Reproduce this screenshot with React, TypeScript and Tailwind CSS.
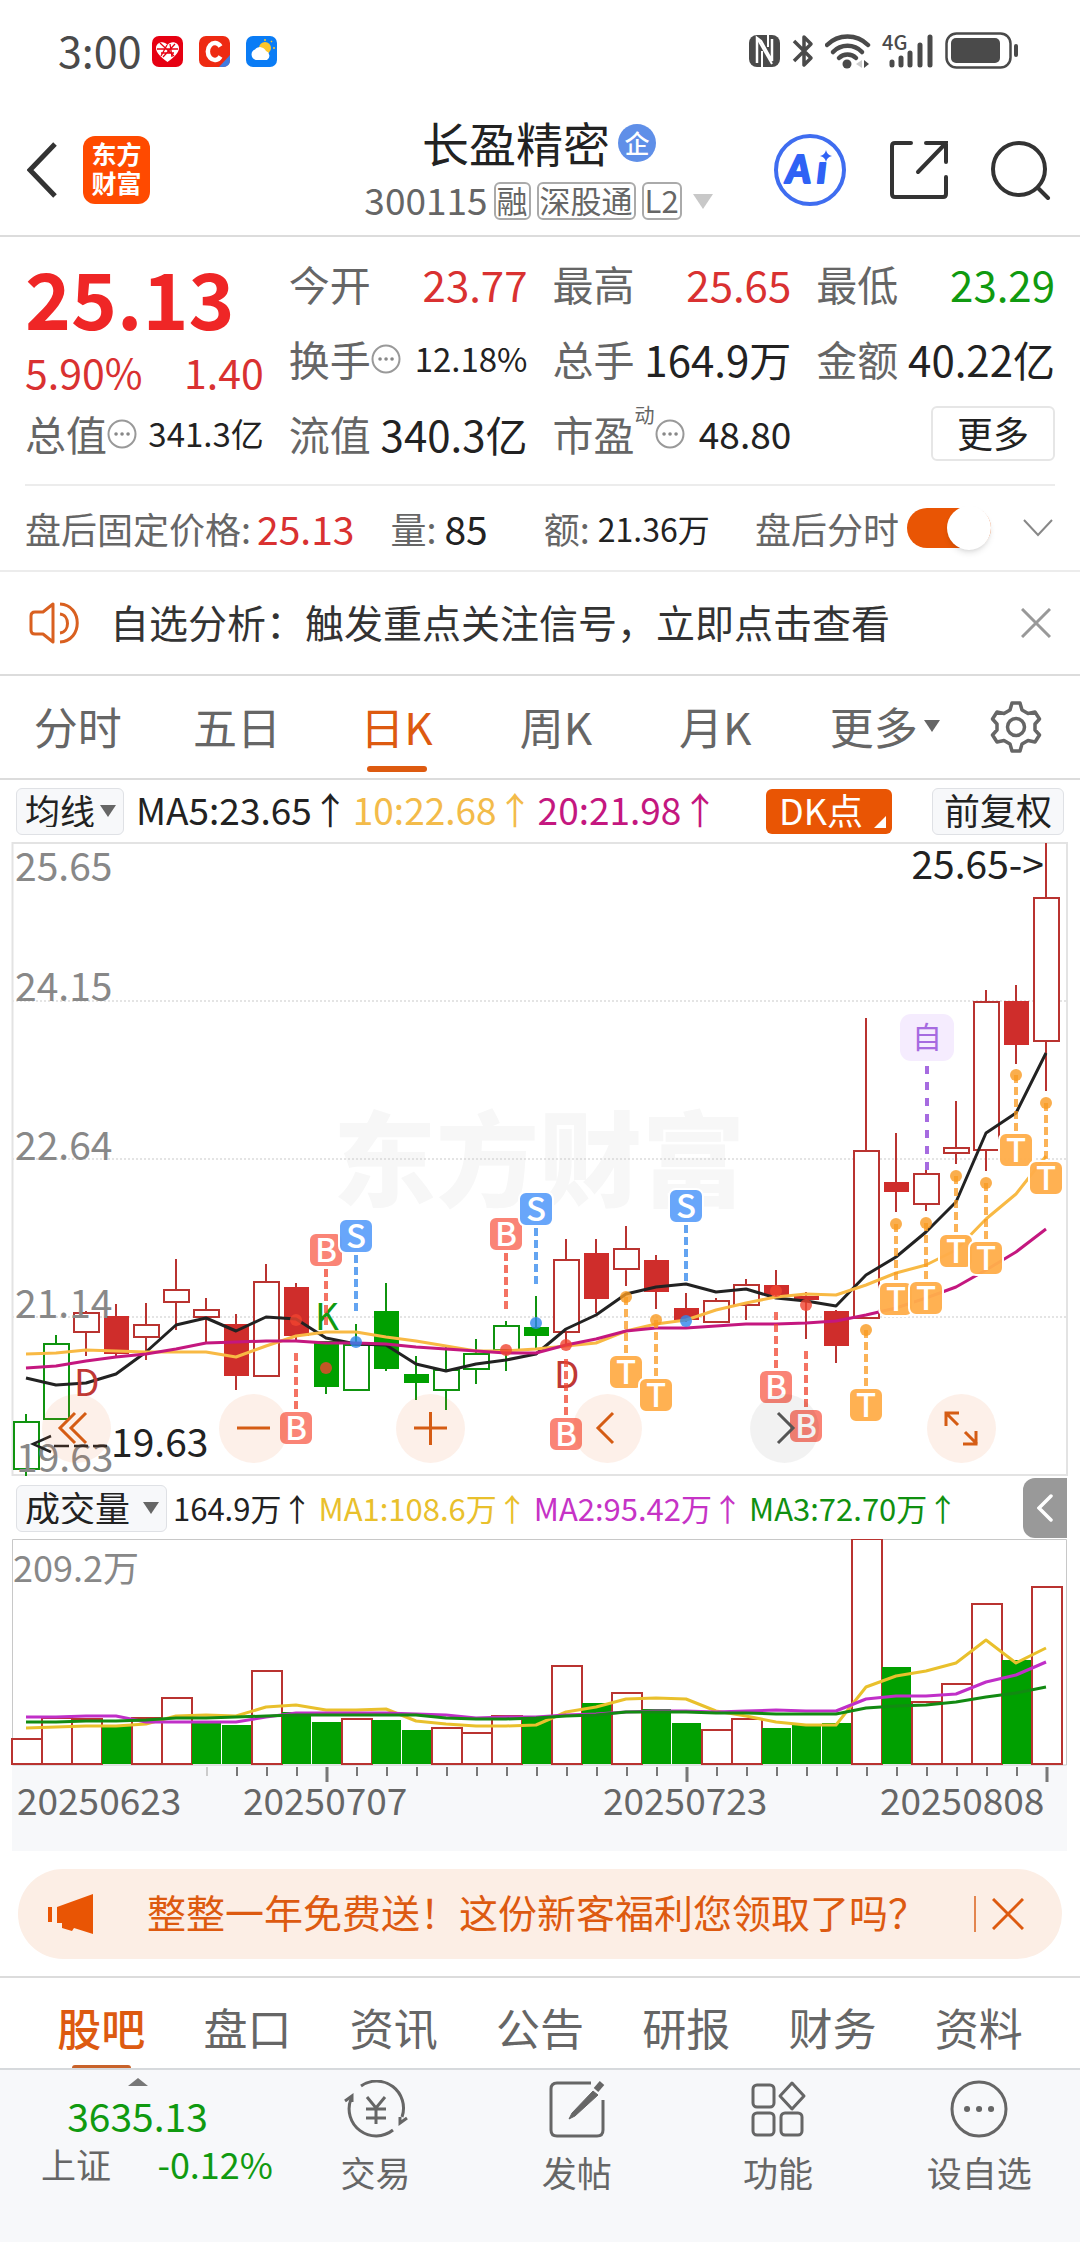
import { useState } from "react";
import type { ReactNode } from "react";

type Candle = {
  kind: "up" | "down" | "flat" | "drop";
  open: number;
  close: number;
  high: number;
  low: number;
};

type Marker = {
  label: "B" | "S" | "T";
  index: number;
  y: number;
  dot: number;
};

const CANDLE_STEP = 30;
const CANDLE_START = 26;
const RED = "#b93330";
const RED_FILL = "#cf2d2b";
const GREEN = "#0f930f";
const GREEN_FILL = "#00a000";

const MARKER_COLORS = {
  B: "#fa7f70",
  S: "#62a2fa",
  T: "#ffae4b",
};

const DOT_COLORS = {
  B: "#f0442f",
  S: "#2f86ec",
  T: "#f99a20",
};

// up: hollow red, down: solid red, flat: hollow green, drop: solid green
const candles: Candle[] = [
  { kind: "flat", open: 1422, close: 1469, high: 1414, low: 1476 },
  { kind: "flat", open: 1344, close: 1419, high: 1335, low: 1419 },
  { kind: "up", open: 1313, close: 1332, high: 1311, low: 1356 },
  { kind: "down", open: 1316, close: 1354, high: 1304, low: 1357 },
  { kind: "up", open: 1325, close: 1337, high: 1303, low: 1360 },
  { kind: "up", open: 1290, close: 1302, high: 1259, low: 1330 },
  { kind: "up", open: 1310, close: 1317, high: 1298, low: 1343 },
  { kind: "down", open: 1324, close: 1376, high: 1314, low: 1390 },
  { kind: "up", open: 1282, close: 1376, high: 1264, low: 1376 },
  { kind: "down", open: 1287, close: 1336, high: 1283, low: 1340 },
  { kind: "drop", open: 1341, close: 1387, high: 1341, low: 1394 },
  { kind: "flat", open: 1345, close: 1390, high: 1324, low: 1390 },
  { kind: "drop", open: 1311, close: 1369, high: 1283, low: 1371 },
  { kind: "drop", open: 1374, close: 1383, high: 1356, low: 1400 },
  { kind: "flat", open: 1370, close: 1390, high: 1347, low: 1410 },
  { kind: "flat", open: 1354, close: 1369, high: 1339, low: 1384 },
  { kind: "flat", open: 1326, close: 1350, high: 1321, low: 1371 },
  { kind: "drop", open: 1327, close: 1336, high: 1296, low: 1350 },
  { kind: "up", open: 1260, close: 1332, high: 1239, low: 1345 },
  { kind: "down", open: 1253, close: 1299, high: 1239, low: 1313 },
  { kind: "up", open: 1249, close: 1269, high: 1226, low: 1286 },
  { kind: "down", open: 1260, close: 1292, high: 1255, low: 1309 },
  { kind: "down", open: 1308, close: 1320, high: 1293, low: 1322 },
  { kind: "up", open: 1301, close: 1322, high: 1298, low: 1322 },
  { kind: "up", open: 1285, close: 1305, high: 1279, low: 1320 },
  { kind: "down", open: 1285, close: 1295, high: 1270, low: 1298 },
  { kind: "down", open: 1296, close: 1300, high: 1292, low: 1339 },
  { kind: "down", open: 1311, close: 1346, high: 1310, low: 1363 },
  { kind: "up", open: 1151, close: 1318, high: 1018, low: 1318 },
  { kind: "down", open: 1182, close: 1192, high: 1133, low: 1212 },
  { kind: "up", open: 1174, close: 1204, high: 1170, low: 1211 },
  { kind: "up", open: 1148, close: 1153, high: 1101, low: 1164 },
  { kind: "up", open: 1002, close: 1150, high: 990, low: 1171 },
  { kind: "down", open: 1001, close: 1045, high: 985, low: 1064 },
  { kind: "up", open: 898, close: 1041, high: 843, low: 1091 },
];

const ma5 = [
  1378, 1385, 1383, 1374, 1352, 1325, 1318, 1331, 1317, 1319, 1338, 1344, 1345, 1364, 1371, 1364, 1360, 1354,
  1329, 1315, 1294, 1287, 1284, 1292, 1289, 1298, 1301, 1306, 1275, 1257, 1232, 1202, 1133, 1113, 1053,
];
const ma10 = [
  1354, 1353, 1350, 1351, 1352, 1352, 1352, 1357, 1346, 1336, 1332, 1332, 1337, 1341, 1346, 1351, 1351, 1349,
  1346, 1343, 1331, 1324, 1320, 1310, 1303, 1297, 1294, 1295, 1285, 1273, 1265, 1250, 1219, 1194, 1156,
];
const ma20 = [
  1368, 1366, 1361, 1357, 1354, 1349, 1343, 1342, 1341, 1341, 1343, 1343, 1344, 1347, 1349, 1351, 1353, 1353,
  1345, 1339, 1331, 1328, 1328, 1326, 1324, 1324, 1323, 1321, 1315, 1308, 1298, 1287, 1270, 1252, 1229,
];

const markers: Marker[] = [
  { label: "B", index: 9, y: 1428, dot: 1320 },
  { label: "B", index: 10, y: 1250, dot: 1368 },
  { label: "S", index: 11, y: 1236, dot: 1342 },
  { label: "B", index: 16, y: 1234, dot: 1350 },
  { label: "S", index: 17, y: 1209, dot: 1323 },
  { label: "B", index: 18, y: 1434, dot: 1345 },
  { label: "T", index: 20, y: 1372, dot: 1297 },
  { label: "T", index: 21, y: 1395, dot: 1320 },
  { label: "S", index: 22, y: 1206, dot: 1321 },
  { label: "B", index: 25, y: 1387, dot: 1291 },
  { label: "B", index: 26, y: 1426, dot: 1305 },
  { label: "T", index: 28, y: 1405, dot: 1330 },
  { label: "T", index: 29, y: 1299, dot: 1224 },
  { label: "T", index: 30, y: 1298, dot: 1223 },
  { label: "T", index: 31, y: 1251, dot: 1176 },
  { label: "T", index: 32, y: 1258, dot: 1183 },
  { label: "T", index: 33, y: 1150, dot: 1075 },
  { label: "T", index: 34, y: 1178, dot: 1103 },
];

const volumes: [string, number][] = [
  ["r", 1739], ["r", 1718], ["r", 1719], ["g", 1726], ["r", 1718], ["r", 1698], ["g", 1723],
  ["g", 1725], ["r", 1671], ["g", 1712], ["g", 1722], ["r", 1719], ["g", 1720], ["g", 1730],
  ["r", 1728], ["r", 1733], ["r", 1716], ["g", 1718], ["r", 1666], ["g", 1703], ["r", 1693],
  ["g", 1709], ["g", 1723], ["r", 1730], ["r", 1719], ["g", 1728], ["g", 1725], ["g", 1723],
  ["r", 1539], ["g", 1667], ["r", 1702], ["r", 1684], ["r", 1604], ["g", 1660], ["r", 1587],
];

const volMa1 = [
  1728, 1727, 1726, 1726, 1724, 1716, 1715, 1716, 1707, 1705, 1710, 1710, 1709, 1721, 1724, 1726, 1726, 1725,
  1712, 1707, 1699, 1698, 1699, 1711, 1716, 1722, 1725, 1725, 1687, 1676, 1671, 1663, 1640, 1663, 1648,
];
const volMa2 = [
  1717, 1717, 1716, 1716, 1722, 1722, 1722, 1722, 1717, 1713, 1713, 1713, 1713, 1714, 1715, 1718, 1717, 1717,
  1715, 1714, 1712, 1711, 1711, 1712, 1711, 1710, 1711, 1711, 1699, 1696, 1696, 1694, 1682, 1675, 1662,
];
const volMa3 = [
  1722, 1722, 1721, 1721, 1720, 1718, 1718, 1717, 1716, 1715, 1715, 1715, 1715, 1715, 1718, 1719, 1719, 1718,
  1716, 1715, 1712, 1712, 1712, 1713, 1713, 1714, 1714, 1714, 1708, 1706, 1705, 1702, 1697, 1693, 1687,
];

const columnX = (index: number) => CANDLE_START + index * CANDLE_STEP;

const toPoints = (values: number[]) => values.map((y, index) => `${columnX(index)},${y}`).join(" ");

function Triangle({ className }: { className: string }) {
  return (
    <svg viewBox="0 0 16 12" className={className} aria-hidden="true">
      <path d="M0 0H16L8 12Z" fill="currentColor" />
    </svg>
  );
}

function StatusBar() {
  return (
    <div className="flex h-[100px] items-center justify-between pt-0.5 pr-[61px] pl-[58px]">
      <div className="flex items-center gap-2.5">
        <span className="pb-1 text-[43px] leading-none text-[#4a4a4a]">3:00</span>
        <div className="flex gap-4">
          <svg viewBox="0 0 31 31" className="size-[31px]">
            <rect width="31" height="31" rx="7" fill="#e60012" />
            <path
              d="M15.500 26C9 21 4 17 4 12C4 6 12 4 15.500 9C19 4 27 6 27 12C27 17 22 21 15.500 26Z"
              fill="#fff"
            />
            <path d="M8 7L22 20M15 9L9 20M23 8L11 21M5 13H26M18 8L20 21M9 17H22" stroke="#e60012" strokeWidth="1.300" />
          </svg>
          <svg viewBox="0 0 31 31" className="size-[31px]">
            <rect width="31" height="31" rx="7" fill="#ee2a12" />
            <path d="M21.500 10.500A7 8.500 0 1 0 21.500 20.500" fill="none" stroke="#fff" strokeWidth="4.500" />
            <path d="M31 19V24Q31 31 24 31H20Z" fill="#3f7be0" />
          </svg>
          <svg viewBox="0 0 31 31" className="size-[31px]">
            <rect width="31" height="31" rx="7" fill="#0a7cf5" />
            <circle cx="19" cy="12" r="6" fill="#ffc62a" />
            <path d="M19 3V5M27 12H29M25 6L26 5" stroke="#ffc62a" strokeWidth="1.500" />
            <path d="M10 24A5.500 5.500 0 0 1 9 13.500A6.500 6.500 0 0 1 20 15A5 5 0 0 1 21 24Z" fill="#fff" />
          </svg>
        </div>
      </div>
      <div className="flex items-center gap-[11px] text-[#4a4a4a]">
        <svg viewBox="0 0 32 34" className="h-[34px] w-8">
          <rect x="0" y="1" width="31" height="32" rx="8" fill="currentColor" />
          <path d="M8 29V4L12 7L23 27V5" fill="none" stroke="#fff" strokeWidth="2.500" />
          <path d="M8 4L23 30" stroke="#fff" strokeWidth="2" />
          <path d="M13 17V33M19 1V13" stroke="#fff" strokeWidth="2" />
        </svg>
        <svg viewBox="0 0 22 34" className="h-[34px] w-[22px]" fill="none" stroke="currentColor" strokeWidth="3.500">
          <path d="M2 7L19 24L12 31V3L19 10L2 27" strokeLinejoin="round" />
        </svg>
        <svg viewBox="0 0 46 36" className="h-9 w-[46px]" fill="none" stroke="currentColor" strokeWidth="4.500">
          <path d="M2 12A29 29 0 0 1 43 12" strokeLinecap="round" />
          <path d="M8 19A20 20 0 0 1 37 19" strokeLinecap="round" />
          <path d="M14 25A12 12 0 0 1 31 25" strokeLinecap="round" />
          <circle cx="22" cy="31" r="4.500" fill="currentColor" stroke="none" />
          <path d="M37 27L31 31L37 35Z" fill="#ccc" stroke="none" />
          <path d="M39 27L44 31L39 35Z" fill="currentColor" stroke="none" />
        </svg>
        <svg viewBox="0 0 52 36" className="h-9 w-[52px] overflow-visible">
          <text x="0" y="17" className="fill-[#4a4a4a] text-[20px] font-medium">4G</text>
          <path
            d="M10 29V32M19 25V32M28 20V32M38 12V32M48 4V32"
            stroke="currentColor"
            strokeWidth="5"
            strokeLinecap="round"
          />
        </svg>
        <svg viewBox="0 0 74 38" className="h-[38px] w-[74px]">
          <rect x="1.500" y="1.500" width="64" height="34" rx="10" fill="none" stroke="currentColor" strokeWidth="2.500" />
          <rect x="6" y="6" width="49" height="25" rx="5" fill="currentColor" />
          <path d="M71 14V23" stroke="currentColor" strokeWidth="4" strokeLinecap="round" />
        </svg>
      </div>
    </div>
  );
}

function Tag({ children }: { children: ReactNode }) {
  return (
    <span className="flex h-[38px] items-center rounded-md border-2 border-[#aaa] px-px pb-1 text-[31px] leading-none text-[#666]">
      {children}
    </span>
  );
}

function Header() {
  return (
    <header className="grid h-[137px] grid-cols-[1fr_auto_1fr] items-center border-b-2 border-[#dcdcdc] pt-1 pr-[29px] pl-[27px]">
      <div className="flex items-center gap-[26px]">
        <button type="button" aria-label="返回">
          <svg viewBox="0 0 30 56" className="h-14 w-[30px]" fill="none" stroke="#333" strokeWidth="5">
            <path d="M28 2L3 28L28 54" />
          </svg>
        </button>
        <a
          href="#home"
          className="flex h-[68px] w-[67px] flex-col items-center justify-center rounded-xl bg-[#ff4a00] pb-1 text-[25px] leading-[29px] font-bold text-white"
        >
          <span>东方</span>
          <span>财富</span>
        </a>
      </div>
      <div className="flex flex-col items-center gap-3">
        <h1 className="flex items-center gap-2 text-[47px] leading-none text-[#222]">
          <span className="pb-1">长盈精密</span>
          <span className="flex size-[38px] items-center justify-center rounded-full bg-[#5f8fe8] pb-0.5 text-[25px] font-medium text-white">
            企
          </span>
        </h1>
        <div className="flex items-center gap-[6px]">
          <span className="pb-1 text-[37px] leading-none text-[#666]">300115</span>
          <Tag>融</Tag>
          <Tag>深股通</Tag>
          <Tag>L2</Tag>
          <Triangle className="ml-1 h-[15px] w-[22px] text-[#c8c8c8]" />
        </div>
      </div>
      <div className="flex items-center justify-end gap-[42px]">
        <button type="button" aria-label="Ai">
          <svg viewBox="0 0 74 74" className="size-[74px]">
            <circle cx="37" cy="37" r="34" fill="none" stroke="#3f6df0" strokeWidth="4" />
            <text
              x="13 44"
              y="50"
              className="fill-[#2f62f5] stroke-[#2f62f5] font-['Lato'] text-[38px] font-black italic"
              strokeWidth="2"
              strokeLinejoin="round"
            >
              Aı
            </text>
            <path d="M53 17Q54 22 59 23Q54 24 53 29Q52 24 47 23Q52 22 53 17Z" fill="#2f62f5" />
          </svg>
        </button>
        <button type="button" aria-label="分享">
          <svg viewBox="0 0 60 60" className="size-[60px]" fill="none" stroke="#333" strokeWidth="4" strokeLinecap="round">
            <path d="M22 3H6Q3 3 3 6V54Q3 57 6 57H54Q57 57 57 54V37" />
            <path d="M37 3H57V22M57 3L29 32" />
          </svg>
        </button>
        <button type="button" aria-label="搜索">
          <svg viewBox="0 0 60 60" className="size-[60px]" fill="none" stroke="#333" strokeWidth="4" strokeLinecap="round">
            <circle cx="28" cy="29" r="26" />
            <path d="M47 48L57 58" />
          </svg>
        </button>
      </div>
    </header>
  );
}

function InfoDots() {
  return (
    <svg viewBox="0 0 30 30" className="size-[30px] shrink-0" aria-hidden="true">
      <circle cx="15" cy="15" r="13.500" fill="none" stroke="#999" strokeWidth="2" />
      <path d="M9 15H9.100M15 15H15.100M21 15H21.100" stroke="#888" strokeWidth="3.500" strokeLinecap="round" />
    </svg>
  );
}

function Quote({ label, children }: { label: ReactNode; children: ReactNode }) {
  return (
    <div className="flex h-[75px] items-center justify-between whitespace-nowrap">
      <dt className="flex items-center text-[41px] text-[#666]">{label}</dt>
      <dd className="text-[#222]">{children}</dd>
    </div>
  );
}

function QuotePanel() {
  return (
    <section className="grid grid-cols-4 gap-x-[25px] px-[25px] pt-[9px] pb-[13px] leading-none">
      <div className="flex flex-col">
        <div className="flex h-[100px] items-center text-[78px] font-bold text-[#ef2626]">25.13</div>
        <div className="flex h-[50px] items-center justify-between text-[41px] text-[#d93131]">
          <span>5.90%</span>
          <span>1.40</span>
        </div>
        <dl>
          <Quote label={<>总值<InfoDots /></>}>
            <span className="text-[33px]">341.3亿</span>
          </Quote>
        </dl>
      </div>
      <dl>
        <Quote label="今开">
          <span className="text-[42px] text-[#d93131]">23.77</span>
        </Quote>
        <Quote label={<>换手<InfoDots /></>}>
          <span className="text-[33px]">12.18%</span>
        </Quote>
        <Quote label="流值">
          <span className="text-[42px]">340.3亿</span>
        </Quote>
      </dl>
      <dl>
        <Quote label="最高">
          <span className="text-[42px] text-[#d93131]">25.65</span>
        </Quote>
        <Quote label="总手">
          <span className="text-[42px]">164.9万</span>
        </Quote>
        <Quote
          label={
            <>
              市盈<span className="-mt-2 self-start text-[20px]">动</span>
              <InfoDots />
            </>
          }
        >
          <span className="text-[37px]">48.80</span>
        </Quote>
      </dl>
      <div>
        <dl>
          <Quote label="最低">
            <span className="text-[42px] text-[#109a10]">23.29</span>
          </Quote>
          <Quote label="金额">
            <span className="text-[42px]">40.22亿</span>
          </Quote>
        </dl>
        <div className="flex h-[75px] items-center justify-end">
          <button
            type="button"
            className="h-[55px] w-[124px] rounded-md border-2 border-[#e6e6e6] pb-1 text-[36px] text-[#222]"
          >
            更多
          </button>
        </div>
      </div>
    </section>
  );
}

function AfterHours() {
  const [enabled, setEnabled] = useState(true);

  return (
    <section>
      <div className="mx-[25px] border-t-2 border-[#ececec]" />
      <div className="flex h-[84px] items-center pr-[27px] pl-[25px] text-[36px] leading-none whitespace-nowrap text-[#666]">
        <span>盘后固定价格:</span>
        <span className="ml-1.5 text-[39px] text-[#d93131]">25.13</span>
        <span className="ml-9">量:</span>
        <span className="ml-2 text-[39px] text-[#222]">85</span>
        <span className="ml-14">额:</span>
        <span className="ml-2 text-[32px] text-[#222]">21.36万</span>
        <label htmlFor="after-hours" className="ml-auto">
          盘后分时
        </label>
        <input
          id="after-hours"
          type="checkbox"
          role="switch"
          checked={enabled}
          onChange={() => setEnabled((previous) => !previous)}
          className="relative ml-2 h-10 w-[84px] appearance-none rounded-full bg-[#ccc] before:absolute before:-top-0.5 before:left-0 before:size-11 before:rounded-full before:bg-white before:shadow-md before:content-[''] checked:bg-[#e95504] checked:before:left-10"
        />
        <button type="button" aria-label="展开" className="ml-8">
          <svg viewBox="0 0 30 18" className="h-[18px] w-[30px]" fill="none" stroke="#888" strokeWidth="2">
            <path d="M1 1L15 16L29 1" />
          </svg>
        </button>
      </div>
    </section>
  );
}

function Notice() {
  return (
    <section className="flex h-[106px] items-center border-y-2 border-t-[#ececec] border-b-[#dcdcdc] pr-[29px] pl-[29px]">
      <svg viewBox="0 0 52 44" className="h-11 w-[52px]" fill="none" stroke="#d96020" strokeWidth="3">
        <path d="M24 3V41L14 33H6Q2 33 2 29V15Q2 11 6 11H14Z" strokeLinejoin="round" />
        <path d="M31 3C54 4 54 40 31 41M31 13C41 14 41 31 31 32" />
      </svg>
      <a href="#signal" className="ml-[29px] pb-1 text-[39px] leading-none whitespace-nowrap text-[#333]">
        自选分析：触发重点关注信号，立即点击查看
      </a>
      <button type="button" aria-label="关闭" className="ml-auto">
        <svg viewBox="0 0 30 30" className="size-[30px]" stroke="#999" strokeWidth="3">
          <path d="M1 1L29 29M29 1L1 29" />
        </svg>
      </button>
    </section>
  );
}

function PeriodTabs() {
  const [active, setActive] = useState("日K");

  return (
    <nav className="grid h-[104px] grid-cols-[repeat(6,4fr)_3fr] border-b-2 border-[#dcdcdc] pr-1 text-[44px] leading-none text-[#666]">
      {["分时", "五日", "日K", "周K", "月K"].map((name) => (
        <button
          key={name}
          type="button"
          onClick={() => setActive(name)}
          className={`relative flex items-center justify-center pr-1 pb-0.5 ${active === name ? "text-[#dd5a10]" : ""}`}
        >
          {name}
          {active === name && <span className="absolute bottom-1.5 h-1.5 w-[60px] rounded-full bg-[#dd5a10]" />}
        </button>
      ))}
      <button type="button" className="flex items-center justify-center gap-1.5 pb-0.5 pl-4">
        更多
        <Triangle className="h-3 w-4" />
      </button>
      <button type="button" aria-label="设置" className="flex items-center justify-center">
        <svg viewBox="0 0 52 52" className="size-[52px]" fill="none" stroke="#666" strokeWidth="3.500">
          <path
            d="M22 2H30L32 9L38 12.500L45 11L49.500 18L45 23V29L49.500 34L45 41L38 39.500L32 43L30 50H22L20 43L14 39.500L7 41L2.500 34L7 29V23L2.500 18L7 11L14 12.500L20 9Z"
            strokeLinejoin="round"
          />
          <circle cx="26" cy="26" r="8.500" />
        </svg>
      </button>
    </nav>
  );
}

function IndicatorSelect({ name, className }: { name: string; className: string }) {
  return (
    <span className="relative flex items-center">
      <select
        aria-label={name}
        className={`h-[47px] appearance-none rounded-md border border-[#dfe1e5] bg-[#f7f8fa] pb-1 pl-2 text-[35px] leading-none text-[#222] ${className}`}
      >
        <option>{name}</option>
      </select>
      <Triangle className="pointer-events-none absolute right-2 h-3 w-4 text-[#666]" />
    </span>
  );
}

function MovingAverages() {
  return (
    <div className="flex h-[62px] items-center pr-4 pl-4 text-[37px] leading-none whitespace-nowrap">
      <IndicatorSelect name="均线" className="w-[108px]" />
      <span className="ml-3 pb-1 text-[#222]">MA5:23.65↑</span>
      <span className="ml-1 pb-1 text-[#f3bb4a]">10:22.68↑</span>
      <span className="ml-1 pb-1 text-[#c4177f]">20:21.98↑</span>
      <button type="button" className="relative ml-auto h-[45px] w-[126px] rounded-md bg-[#e95504] pr-4 pb-1 text-[36px] text-white">
        DK点
        <svg viewBox="0 0 12 12" className="absolute right-1.5 bottom-1.5 size-3">
          <path d="M12 0V12H0Z" fill="#fff" />
        </svg>
      </button>
      <button
        type="button"
        className="ml-10 h-[47px] w-[132px] rounded-md border border-[#dfe1e5] bg-[#f7f8fa] pb-1 text-[36px] text-[#222]"
      >
        前复权
      </button>
    </div>
  );
}

function CandleShape({ candle, index }: { candle: Candle; index: number }) {
  const x = columnX(index);
  const red = candle.kind === "up" || candle.kind === "down";
  const hollow = candle.kind === "up" || candle.kind === "flat";

  return (
    <g stroke={red ? RED : GREEN} strokeWidth="2">
      <path d={`M${x} ${candle.high}V${candle.open}M${x} ${candle.close}V${candle.low}`} />
      {hollow ? (
        <rect
          x={x - 12}
          y={candle.open}
          width="25"
          height={candle.close - candle.open}
          fill={index < 2 ? "none" : "#fff"}
        />
      ) : (
        <rect
          x={x - 12}
          y={candle.open}
          width="25"
          height={candle.close - candle.open}
          fill={red ? RED_FILL : GREEN_FILL}
          stroke="none"
        />
      )}
    </g>
  );
}

function MarkerShape({ marker }: { marker: Marker }) {
  const x = columnX(marker.index);
  const below = marker.y > marker.dot;
  // T stems touch their dot; B and S stems have a fixed length
  const from = below ? marker.y - 18 : marker.y + 19;
  const to = marker.label === "T" ? marker.dot : below ? marker.y - 75 : marker.y + 75;

  return (
    <g>
      <path
        d={`M${x} ${to}V${from}`}
        stroke={DOT_COLORS[marker.label]}
        strokeOpacity="0.75"
        strokeWidth="4"
        strokeDasharray="8 4"
      />
      <circle cx={x} cy={marker.dot} r="6" fill={DOT_COLORS[marker.label]} fillOpacity="0.8" />
      <rect
        x={x - 17}
        y={marker.y - 17}
        width="34"
        height="34"
        rx="7"
        fill={MARKER_COLORS[marker.label]}
        fillOpacity="0.96"
        stroke="#fff"
        strokeWidth="2"
      />
      <text x={x} y={marker.y + 12} textAnchor="middle" className="fill-white text-[33px] font-medium">
        {marker.label}
      </text>
    </g>
  );
}

function CandleChart() {
  return (
    <svg viewBox="0 842 1080 635" className="block w-full overflow-visible">
      <text x="333" y="1199" className="fill-[#f7f7f7] text-[103px] font-black">
        东方财富
      </text>
      <g fill="none" stroke="#c9c9c9" strokeWidth="1" strokeDasharray="2 2">
        <path d="M12 1001H1067M12 1159H1067M12 1317H1067" />
      </g>
      <rect x="12.500" y="843" width="1054.500" height="632" fill="none" stroke="#e3e3e3" strokeWidth="2" />
      {candles.map((candle, index) => (
        <CandleShape key={index} candle={candle} index={index} />
      ))}
      <g className="fill-[#888] text-[39px]">
        <text x="15" y="881">25.65</text>
        <text x="15" y="1001">24.15</text>
        <text x="15" y="1160">22.64</text>
        <text x="15" y="1318">21.14</text>
        <text x="16" y="1472">19.63</text>
      </g>
      <g fill="none" strokeWidth="3" strokeLinejoin="round">
        <polyline points={toPoints(ma5)} stroke="#222" />
        <polyline points={toPoints(ma10)} stroke="#f8b944" />
        <polyline points={toPoints(ma20)} stroke="#c4177f" />
      </g>
      <text x="1044" y="879" textAnchor="end" className="fill-[#222] text-[39px]">
        25.65-&gt;
      </text>
      <path d="M51 1436L33 1444L51 1452M54 1446H69M74 1446H88M93 1446H107" fill="none" stroke="#222" strokeWidth="2.500" />
      <text x="111" y="1457" className="fill-[#222] text-[39px]">
        19.63
      </text>
      <text x="315" y="1330" className="fill-[#109a10] text-[37px]">K</text>
      <text x="74" y="1396" className="fill-[#bf3835] text-[37px]">D</text>
      <text x="554" y="1388" className="fill-[#bf3835] text-[37px]">D</text>
      {markers.map((marker) => (
        <MarkerShape key={marker.index} marker={marker} />
      ))}
      <rect x="900" y="1014" width="54" height="47" rx="11" fill="#f5ecfe" />
      <text x="927" y="1048" textAnchor="middle" className="fill-[#a66be0] text-[30px]">
        自
      </text>
      <path d="M927 1066V1170" stroke="#a66be0" strokeWidth="4" strokeDasharray="8 8" />
    </svg>
  );
}

const chartControls = [
  { label: "最左", path: "M33 19L18 34L33 49M44 19L29 34L44 49" },
  { label: "缩小", path: "M18 34H51" },
  { label: "放大", path: "M18 34H51M34.500 18V51" },
  { label: "左移", path: "M40 19L25 34L40 49" },
  { label: "右移", path: "M28 19L43 34L28 49", muted: true },
  { label: "全屏", path: "M19 32V19H32M19 19L31 31M49 37V50H36M50 50L38 38" },
];

function ChartControls() {
  return (
    <div className="absolute right-[84px] bottom-[14px] left-[42px] flex justify-between">
      {chartControls.map((control) => (
        <button
          key={control.label}
          type="button"
          aria-label={control.label}
          className={`size-[69px] rounded-full ${
            control.muted ? "bg-black/5 text-[#555]" : "bg-[#f06a2a]/10 text-[#d55c14]"
          }`}
        >
          <svg viewBox="0 0 69 69" fill="none" stroke="currentColor" strokeWidth="3">
            <path d={control.path} />
          </svg>
        </button>
      ))}
    </div>
  );
}

function VolumeHeader() {
  return (
    <div className="flex h-[62px] items-center gap-1.5 pr-[13px] pl-4 text-[31px] leading-none whitespace-nowrap">
      <IndicatorSelect name="成交量" className="w-[151px]" />
      <span className="pb-0.5 text-[#222]">164.9万↑</span>
      <span className="pb-0.5 text-[#e9c02c]">MA1:108.6万↑</span>
      <span className="pb-0.5 text-[#c633c6]">MA2:95.42万↑</span>
      <span className="pb-0.5 text-[#109010]">MA3:72.70万↑</span>
      <button
        type="button"
        aria-label="收起"
        className="ml-auto flex h-[60px] w-11 items-center justify-center rounded-l-xl bg-[#999]"
      >
        <svg viewBox="0 0 16 28" className="h-7 w-4" fill="none" stroke="#fff" strokeWidth="3.500" strokeLinecap="round">
          <path d="M14 2L2 14L14 26" />
        </svg>
      </button>
    </div>
  );
}

function VolumeChart() {
  return (
    <svg viewBox="0 1539 1080 312" className="block w-full">
      <rect x="12" y="1765" width="1055" height="86" fill="#f7f8fa" />
      <path d="M12.500 1765V1539.500H1066.500V1765Z" fill="none" stroke="#c8c8c8" strokeWidth="1" />
      {volumes.map(([color, top], index) => {
        const x = columnX(index);
        return color === "g" ? (
          <rect key={index} x={x - 14} y={top} width="29" height={1764 - top} fill={GREEN_FILL} />
        ) : (
          <rect
            key={index}
            x={x - 14}
            y={top}
            width="30"
            height={1764 - top}
            fill="#fff"
            stroke={RED}
            strokeWidth="2"
          />
        );
      })}
      <g fill="none" strokeWidth="3" strokeLinejoin="round">
        <polyline points={toPoints(volMa1)} stroke="#e9c02c" />
        <polyline points={toPoints(volMa2)} stroke="#c02fc8" />
        <polyline points={toPoints(volMa3)} stroke="#128a12" />
      </g>
      {volumes.map((_, index) => {
        if (index < 6) return null;
        const major = (index - 10) % 12 === 0;
        return (
          <path
            key={index}
            d={`M${columnX(index) + 1} 1767V${major ? 1782 : 1776}`}
            stroke={index === 6 ? "#ccc" : "#777"}
            strokeWidth={major ? 3 : 2}
          />
        );
      })}
      <text x="13" y="1582" className="fill-[#888] text-[36px]">
        209.2万
      </text>
      <g className="fill-[#666] text-[37px]">
        <text x="17" y="1815">20250623</text>
        <text x="243" y="1815">20250707</text>
        <text x="603" y="1815">20250723</text>
        <text x="880" y="1815">20250808</text>
      </g>
    </svg>
  );
}

function Promo() {
  return (
    <section className="mx-[18px] mt-[18px] mb-[17px] flex h-[90px] items-center rounded-full bg-[#fceee5] pr-[38px] pl-[30px] text-[#dd5a10]">
      <svg viewBox="0 0 46 40" className="h-10 w-[46px] shrink-0" fill="#e95504">
        <path d="M0 13H4V28H0ZM9 13L45 0V40L26 34L24 37L14 34V29H9Z" />
      </svg>
      <a href="#gift" className="ml-[53px] pb-1.5 text-[39px] leading-none whitespace-nowrap">
        整整一年免费送！这份新客福利您领取了吗？
      </a>
      <span className="ml-auto h-9 w-0.5 bg-[#e3854f]" />
      <button type="button" aria-label="关闭" className="ml-4">
        <svg viewBox="0 0 32 32" className="size-8" stroke="#dd5a10" strokeWidth="3">
          <path d="M1 1L31 31M31 1L1 31" />
        </svg>
      </button>
    </section>
  );
}

function SectionTabs() {
  const [active, setActive] = useState("股吧");

  return (
    <nav className="grid h-[92px] grid-cols-7 overflow-hidden border-t-2 border-[#dcdcdc] px-7 text-[44px] leading-none text-[#666]">
      {["股吧", "盘口", "资讯", "公告", "研报", "财务", "资料"].map((name) => (
        <button
          key={name}
          type="button"
          onClick={() => setActive(name)}
          className={`relative flex items-center justify-center pt-2 ${
            active === name ? "font-medium text-[#dd5a10]" : ""
          }`}
        >
          {name}
          {active === name && <span className="absolute bottom-0 h-[3px] w-[59px] rounded-t-sm bg-[#c8622a]" />}
        </button>
      ))}
    </nav>
  );
}

function BottomAction({ label, children }: { label: string; children: ReactNode }) {
  return (
    <button type="button" className="flex flex-col items-center gap-4 pt-2.5 text-[35px] leading-none text-[#666]">
      <svg viewBox="0 0 64 58" className="h-[58px] w-16" fill="none" stroke="currentColor" strokeWidth="3">
        {children}
      </svg>
      {label}
    </button>
  );
}

function BottomBar() {
  return (
    <footer className="grid min-h-[174px] grid-cols-[275px_repeat(4,1fr)] border-t-2 border-[#d6d9dc] bg-[#f7f8fa] leading-none">
      <button type="button" className="flex flex-col items-center pt-2 text-[39px] text-[#109a10]">
        <svg viewBox="0 0 20 8" className="h-2 w-5" aria-hidden="true">
          <path d="M10 0L20 8H0Z" fill="#777" />
        </svg>
        <span className="mt-2.5">3635.13</span>
        <span className="mt-2.5 flex w-full items-center justify-between pr-0.5 pl-[41px] text-[36px]">
          <span className="text-[35px] text-[#666]">上证</span>
          <span>-0.12%</span>
        </span>
      </button>
      <BottomAction label="交易">
        <path d="M17 6A27 27 0 0 1 58 37M49 50A27 27 0 0 1 7 19" />
        <path d="M1 21L8 16V22M63 38L56 43V37" />
        <path d="M23 17L32 28L41 17M32 28V44M22 29H42M22 38H42" />
      </BottomAction>
      <BottomAction label="发帖">
        <path d="M46 3H12Q6 3 6 9V50Q6 56 12 56H52Q58 56 58 50V20" />
        <path d="M57 3L51 10" strokeWidth="6" />
        <path d="M48 11L53 15L30 36L24 39L27 33Z" fill="currentColor" strokeWidth="1" />
      </BottomAction>
      <BottomAction label="功能">
        <rect x="7" y="5" width="21" height="22" rx="4" />
        <rect x="7" y="33" width="21" height="22" rx="4" />
        <rect x="35" y="33" width="21" height="22" rx="4" />
        <path d="M46 3L58 16L46 29L34 16Z" strokeLinejoin="round" />
      </BottomAction>
      <BottomAction label="设自选">
        <circle cx="32" cy="29" r="27" />
        <path d="M20 29H20.100M32 29H32.100M44 29H44.100" strokeWidth="6" strokeLinecap="round" />
      </BottomAction>
    </footer>
  );
}

export default function App() {
  return (
    <main className="flex min-h-screen flex-col bg-white font-['Noto_Sans_CJK_SC',sans-serif] text-[#222]">
      <StatusBar />
      <Header />
      <QuotePanel />
      <AfterHours />
      <Notice />
      <PeriodTabs />
      <MovingAverages />
      <div className="relative">
        <CandleChart />
        <ChartControls />
      </div>
      <VolumeHeader />
      <VolumeChart />
      <Promo />
      <SectionTabs />
      <BottomBar />
    </main>
  );
}
